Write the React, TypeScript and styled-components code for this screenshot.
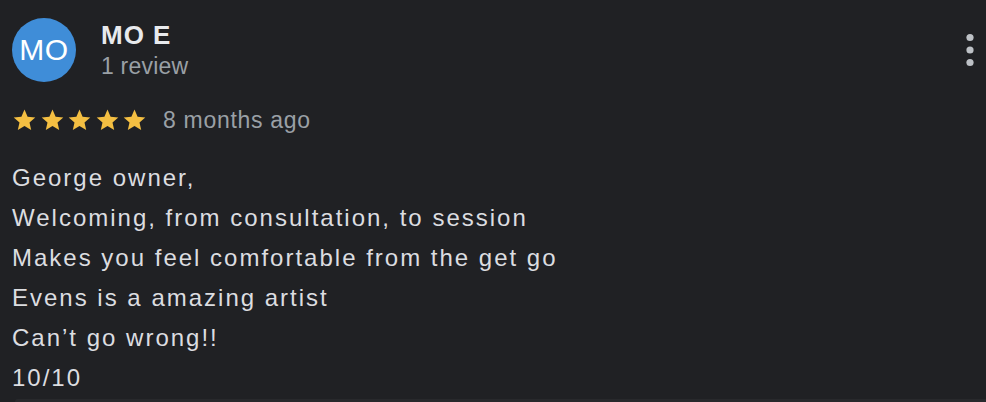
import React from "react";
import styled, { createGlobalStyle } from "styled-components";

const GlobalStyle = createGlobalStyle`
  html, body {
    margin: 0;
    padding: 0;
    background: #202124;
    overflow: hidden;
  }
  body {
    font-family: "Liberation Sans", Arial, sans-serif;
  }
`;

const Review = styled.div`
  position: relative;
  width: 986px;
  height: 399px;
  padding: 18px 12px 0 12px;
  box-sizing: border-box;
  background: #202124;
  overflow: hidden;
`;

const Header = styled.div`
  display: flex;
  align-items: flex-start;
  gap: 25px;
`;

const Avatar = styled.div`
  width: 64px;
  height: 64px;
  border-radius: 50%;
  background: #3f8dd8;
  color: #fff;
  font-size: 30px;
  letter-spacing: 0.5px;
  display: flex;
  align-items: center;
  justify-content: center;
  flex-shrink: 0;
`;

const Who = styled.div`
  display: flex;
  flex-direction: column;
  padding-top: 2px;
`;

const Name = styled.div`
  color: #e8eaed;
  font-size: 26px;
  font-weight: bold;
  line-height: 30px;
  letter-spacing: 1px;
`;

const Count = styled.div`
  margin-top: 1px;
  color: #9aa0a6;
  font-size: 23px;
  line-height: 30px;
  letter-spacing: 0.2px;
`;

const MoreButton = styled.button`
  position: absolute;
  top: 30px;
  right: 11px;
  width: 10px;
  height: 40px;
  padding: 0;
  border: none;
  background: none;
  display: flex;
  align-items: center;
  justify-content: center;
`;

const RatingRow = styled.div`
  display: flex;
  align-items: center;
  gap: 16px;
  height: 30px;
  margin-top: 23px;
`;

const Stars = styled.div`
  display: flex;
  gap: 2.5px;
`;

const When = styled.span`
  color: #9aa0a6;
  font-size: 23px;
  line-height: 30px;
  letter-spacing: 0.7px;
`;

const Body = styled.div`
  margin-top: 23px;
  color: #dcdde0;
  font-size: 24px;
  line-height: 40px;
  letter-spacing: 2px;
`;

const NextCard = styled.div`
  height: 3px;
  margin-left: 15px;
  background: #28292c;
  border-top-left-radius: 6px;
`;

const Star = () => (
  <svg width="25" height="24" viewBox="0 0 24 24">
    <path
      fill="#f4bf42"
      d="M12 1.6l3.1 7.1 7.7.7-5.8 5.1 1.7 7.6L12 18.1l-6.7 4 1.7-7.6-5.8-5.1 7.7-.7z"
    />
  </svg>
);

const Dots = () => (
  <svg width="10" height="36" viewBox="0 0 10 36">
    <circle cx="5" cy="5.5" r="3.6" fill="#bdc1c6" />
    <circle cx="5" cy="18" r="3.6" fill="#bdc1c6" />
    <circle cx="5" cy="30.5" r="3.6" fill="#bdc1c6" />
  </svg>
);

const lines = [
  "George owner,",
  "Welcoming, from consultation, to session",
  "Makes you feel comfortable from the get go",
  "Evens is a amazing artist",
  "Can\u2019t go wrong!!",
  "10/10",
];

export default function App() {
  return (
    <>
      <GlobalStyle />
      <Review>
        <Header>
          <Avatar>MO</Avatar>
          <Who>
            <Name>MO E</Name>
            <Count>1 review</Count>
          </Who>
        </Header>
        <MoreButton aria-label="More">
          <Dots />
        </MoreButton>
        <RatingRow>
          <Stars>
            {[0, 1, 2, 3, 4].map((i) => (
              <Star key={i} />
            ))}
          </Stars>
          <When>8 months ago</When>
        </RatingRow>
        <Body>
          {lines.map((l) => (
            <div key={l}>{l}</div>
          ))}
        </Body>
      </Review>
      <NextCard />
    </>
  );
}
